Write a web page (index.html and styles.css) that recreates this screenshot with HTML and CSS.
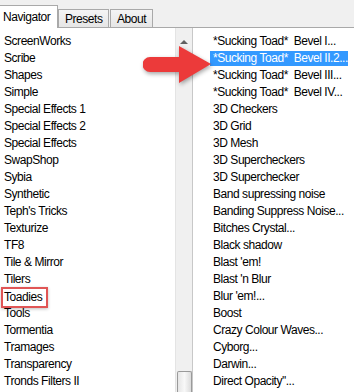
FILE: index.html
```html
<!DOCTYPE html>
<html lang="en">
<head>
  <meta charset="UTF-8">
  <title>Filters Unlimited - Navigator</title>
  <link rel="stylesheet" href="styles.css">
</head>
<body>
  <div class="window">
    <!-- Tabs -->
    <div class="tabs">
      <div class="tab active">Navigator</div>
      <div class="tab">Presets</div>
      <div class="tab">About</div>
    </div>

    <div class="panel">
      <!-- Categories -->
      <div class="list cats">
        <div class="row">ScreenWorks</div>
        <div class="row">Scribe</div>
        <div class="row">Shapes</div>
        <div class="row">Simple</div>
        <div class="row">Special Effects 1</div>
        <div class="row">Special Effects 2</div>
        <div class="row">Special Effects</div>
        <div class="row">SwapShop</div>
        <div class="row">Sybia</div>
        <div class="row">Synthetic</div>
        <div class="row">Teph's Tricks</div>
        <div class="row">Texturize</div>
        <div class="row">TF8</div>
        <div class="row">Tile &amp; Mirror</div>
        <div class="row">Tilers</div>
        <div class="row"><span class="marked">Toadies</span></div>
        <div class="row">Tools</div>
        <div class="row">Tormentia</div>
        <div class="row">Tramages</div>
        <div class="row">Transparency</div>
        <div class="row">Tronds Filters II</div>
      </div>

      <div class="scrollbar">
        <div class="up-arrow"></div>
        <div class="thumb"></div>
      </div>

      <!-- Filters -->
      <div class="list filters">
        <div class="row">*Sucking Toad*  Bevel I...</div>
        <div class="row sel">*Sucking Toad*  Bevel II.2...</div>
        <div class="row">*Sucking Toad*  Bevel III...</div>
        <div class="row">*Sucking Toad*  Bevel IV...</div>
        <div class="row">3D Checkers</div>
        <div class="row">3D Grid</div>
        <div class="row">3D Mesh</div>
        <div class="row">3D Supercheckers</div>
        <div class="row">3D Superchecker</div>
        <div class="row">Band supressing noise</div>
        <div class="row">Banding Suppress Noise...</div>
        <div class="row">Bitches Crystal...</div>
        <div class="row">Black shadow</div>
        <div class="row">Blast 'em!</div>
        <div class="row">Blast 'n Blur</div>
        <div class="row">Blur 'em!...</div>
        <div class="row">Boost</div>
        <div class="row">Crazy Colour Waves...</div>
        <div class="row">Cyborg...</div>
        <div class="row">Darwin...</div>
        <div class="row">Direct Opacity''...</div>
      </div>
    </div>

    <!-- Callout arrow -->
    <svg class="pointer" width="80" height="44" viewBox="0 0 80 44">
      <path d="M7 13 H36 V2 L68 20 L36 39 V28 H7 A7.5 7.5 0 0 1 7 13 Z" fill="#ec3a3a"/>
    </svg>
  </div>
</body>
</html>
```
FILE: styles.css
```css
body {
  margin: 0;
  background: #f0f0f0;
  font-family: 'Liberation Sans', Arial, sans-serif;
  font-size: 12px;
  letter-spacing: -0.45px;
  color: #000;
}
.window {
  position: relative;
  width: 354px;
  height: 392px;
  overflow: hidden;
}
.tabs {
  display: flex;
  align-items: flex-end;
  height: 27px;
  border-bottom: 1px solid #a9a9a9;
}
.tab {
  height: 17px;
  line-height: 18px;
  padding: 0 6px;
  margin-right: 1px;
  border: 1px solid #a9a9a9;
  border-bottom: none;
  background: linear-gradient(#f4f4f4, #e6e6e6);
  margin-bottom: 0;
}
.tab:nth-child(2) { width: 37px; }
.tab:nth-child(3) { width: 29px; }
.tab.active {
  width: 51px;
  height: 22px;
  line-height: 22px;
  padding: 0 3px;
  margin-right: 0;
  border-left: none;
  background: #fff;
  margin-bottom: -1px;
}
.panel {
  display: flex;
  height: 364px;
  background: #fff;
}
.list {
  padding-top: 5px;
}
.row {
  height: 17px;
  line-height: 17px;
  white-space: pre;
}
.cats {
  width: 171px;
  padding-left: 4px;
}
.marked {
  display: inline-block;
  height: 17px;
  line-height: 17px;
  margin: -1px 0 0 -3px;
  padding: 0 4px 0 1px;
  border: 2px solid #e05555;
  box-shadow: 0 1px 3px rgba(0, 0, 0, 0.25);
  vertical-align: top;
}
.scrollbar {
  width: 16px;
  display: flex;
  flex-direction: column;
  justify-content: space-between;
  align-items: center;
  background: #f0f0f0;
  border-left: 1px solid #e4e4e4;
  border-right: 1px solid #c8c8c8;
}
.up-arrow {
  margin-top: 12px;
  width: 0;
  height: 0;
  border-left: 4px solid transparent;
  border-right: 4px solid transparent;
  border-bottom: 4px solid #606060;
}
.thumb {
  width: 13px;
  height: 20px;
  background: linear-gradient(90deg, #e6e6e6, #f8f8f8 50%, #dcdcdc);
  border: 1px solid #9a9a9a;
  border-bottom: none;
  border-radius: 2px 2px 0 0;
}
.filters {
  flex: 1;
  padding-left: 17px;
  padding-right: 6px;
}
.filters .row {
  padding-left: 3px;
}
.filters .sel {
  color: #fff;
  background: linear-gradient(transparent 1px, #3399ff 1px, #3399ff 16px, transparent 16px);
}
.pointer {
  position: absolute;
  left: 143px;
  top: 44px;
  filter: drop-shadow(1px 2px 2px rgba(0, 0, 0, 0.35));
}
```
